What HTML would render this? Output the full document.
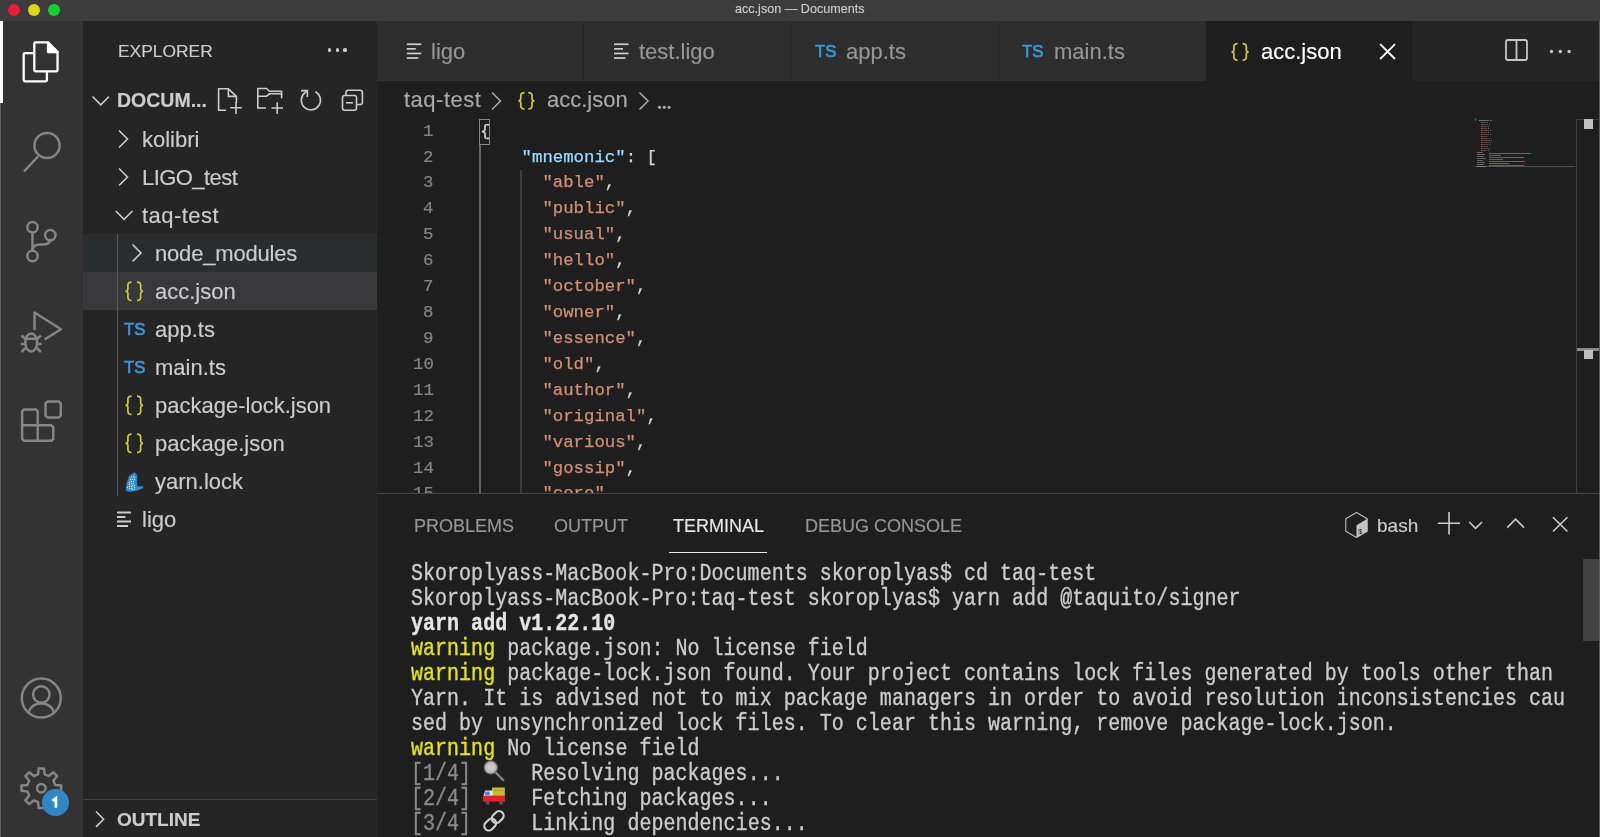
<!DOCTYPE html>
<html><head><meta charset="utf-8">
<style>
*{margin:0;padding:0;box-sizing:border-box}
html,body{width:1600px;height:837px;overflow:hidden;background:#1e1e1e;font-family:"Liberation Sans",sans-serif}
.a{position:absolute}
.t{position:absolute;white-space:pre;line-height:1;will-change:transform;-webkit-text-stroke:0.15px currentColor}
.m{position:absolute;white-space:pre;font-family:"Liberation Mono",monospace;will-change:transform}
svg{position:absolute;left:0;top:0;overflow:visible}
</style></head><body>
<div class="a" style="left:0;top:0;width:1600px;height:21px;background:#3c3c3c"></div>
<div class="a" style="left:0;top:21px;width:83px;height:816px;background:#333333"></div>
<div class="a" style="left:0;top:21px;width:3px;height:82px;background:#ffffff"></div>
<div class="a" style="left:83px;top:21px;width:294px;height:816px;background:#252526"></div>
<div class="a" style="left:377px;top:21px;width:1223px;height:60px;background:#252526"></div>
<div class="a" style="left:377px;top:21px;width:206px;height:60px;background:#2d2d2d"></div>
<div class="a" style="left:584px;top:21px;width:206px;height:60px;background:#2d2d2d"></div>
<div class="a" style="left:791px;top:21px;width:207px;height:60px;background:#2d2d2d"></div>
<div class="a" style="left:999px;top:21px;width:207px;height:60px;background:#2d2d2d"></div>
<div class="a" style="left:1206px;top:21px;width:207px;height:60px;background:#1e1e1e"></div>
<div class="a" style="left:377px;top:81px;width:1223px;height:412px;background:#1e1e1e"></div>
<div class="a" style="left:377px;top:493px;width:1223px;height:1px;background:#474747"></div>
<div class="a" style="left:377px;top:494px;width:1223px;height:343px;background:#1e1e1e"></div>
<div class="a" style="left:8px;top:4px;width:12px;height:12px;border-radius:50%;background:#ee1a3a"></div>
<div class="a" style="left:28px;top:4px;width:12px;height:12px;border-radius:50%;background:#e2d512"></div>
<div class="a" style="left:48px;top:4px;width:12px;height:12px;border-radius:50%;background:#12d23a"></div>
<div class="t" style="left:735.00px;top:2.83px;font-size:12.6px;color:#cccccc;font-weight:normal;">acc.json — Documents</div>
<svg width="83" height="837" style="left:0;top:0">
<g fill="none" stroke-linejoin="round" stroke-linecap="butt">
 <!-- files (white) -->
 <g stroke="#ffffff" stroke-width="2.3">
  <path d="M34.3 53.1 L24.9 53.1 Q23.7 53.1 23.7 54.3 L23.7 80.1 Q23.7 81.3 24.9 81.3 L45.7 81.3 Q46.9 81.3 46.9 80.1 L46.9 71.3"/>
  <path d="M35.5 42.45 L48 42.45 L57.55 52 L57.55 70.1 Q57.55 71.3 56.35 71.3 L35.5 71.3 Q34.3 71.3 34.3 70.1 L34.3 43.65 Q34.3 42.45 35.5 42.45 Z"/>
  <path d="M48 42.45 L48 52 L57.55 52 Z" fill="#ffffff"/>
 </g>
 <g stroke="#858585" stroke-width="2.5">
  <!-- search -->
  <circle cx="47" cy="145.5" r="12.6"/>
  <path d="M24 171.5 L38 156.5"/>
  <!-- source control -->
  <circle cx="32.5" cy="227.2" r="5.2"/>
  <circle cx="50.3" cy="235.1" r="5.2"/>
  <circle cx="32.5" cy="256" r="5.2"/>
  <path d="M32.5 232.4 L32.5 250.8"/>
  <path d="M32.5 250 Q33 245 39 244.5 L44 244.5 Q49.5 244 50.3 240.3"/>
  <!-- debug -->
  <path d="M34.5 330 L34.5 312.5 L61 329.3 L44.6 339.5"/>
  <ellipse cx="31.2" cy="342.5" rx="5.9" ry="9"/>
  <path d="M25.6 338.8 L36.8 338.8"/>
  <path d="M21.5 335.5 L25.5 339 M40.9 335.5 L36.9 339 M20.8 344 L25 344 M41.6 344 L37.4 344 M21.5 352 L25.5 348 M40.9 352 L36.9 348"/>
  <!-- extensions -->
  <path d="M23.9 409.45 L35.9 409.45 L37.7 411.25 L37.7 425.3 L51.45 425.3 L53.25 427.1 L53.25 438.95 L51.45 440.75 L23.95 440.75 L22.15 438.95 L22.15 411.25 Z"/>
  <path d="M22.15 425.3 L37.7 425.3 L37.7 440.75"/>
  <path d="M47.35 401.55 L58.95 401.55 L60.75 403.35 L60.75 415.65 L58.95 417.45 L47.35 417.45 L45.55 415.65 L45.55 403.35 Z"/>
  <!-- account -->
  <circle cx="41.3" cy="698.1" r="19.5"/>
  <circle cx="41.3" cy="694.5" r="8.2"/>
  <path d="M28.5 713 Q31 703.5 41.3 703.5 Q51.6 703.5 54.1 713"/>
  <!-- gear -->
  <circle cx="41.3" cy="788.2" r="4.3"/>
 </g>
</g>
</svg>
<svg width="83" height="837"><path d="M38.64 768.38 L43.96 768.38 L44.61 774.39 L48.72 776.09 L53.43 772.30 L57.20 776.07 L53.41 780.78 L55.11 784.89 L61.12 785.54 L61.12 790.86 L55.11 791.51 L53.41 795.62 L57.20 800.33 L53.43 804.10 L48.72 800.31 L44.61 802.01 L43.96 808.02 L38.64 808.02 L37.99 802.01 L33.88 800.31 L29.17 804.10 L25.40 800.33 L29.19 795.62 L27.49 791.51 L21.48 790.86 L21.48 785.54 L27.49 784.89 L29.19 780.78 L25.40 776.07 L29.17 772.30 L33.88 776.09 L37.99 774.39 Z" fill="none" stroke="#858585" stroke-width="2.5" stroke-linejoin="round"/></svg>
<div class="a" style="left:42.2px;top:789.3px;width:26.6px;height:26.6px;border-radius:50%;background:#2f87c6"></div>
<svg width="83" height="837"><path d="M52.3 800.8 L55.9 798.2 L55.9 807.8" fill="none" stroke="#ffffff" stroke-width="2.7" stroke-linejoin="miter"/></svg>
<div class="t" style="left:117.60px;top:43.27px;font-size:17.4px;color:#cccccc;font-weight:normal;">EXPLORER</div>
<div class="a" style="left:327.90px;top:48.40px;width:3.2px;height:3.2px;border-radius:50%;background:#cccccc"></div>
<div class="a" style="left:335.60px;top:48.40px;width:3.2px;height:3.2px;border-radius:50%;background:#cccccc"></div>
<div class="a" style="left:343.40px;top:48.40px;width:3.2px;height:3.2px;border-radius:50%;background:#cccccc"></div>
<div class="t" style="left:117.30px;top:91.49px;font-size:19.5px;color:#cccccc;font-weight:bold;">DOCUM...</div>
<svg width="400" height="837"><g fill="none" stroke="#cccccc" stroke-width="1.6" stroke-linejoin="miter">
 <path d="M92.5 96.5 L100.8 104.8 L109 96.5"/>
 <!-- new file -->
 <path d="M226 110.3 L218.6 110.3 L218.6 88.8 L228.4 88.8 L236.4 96.4 L236.4 103"/>
 <path d="M228.4 88.8 L228.4 96.4 L236.4 96.4"/>
 <path d="M230.2 107.8 L241.9 107.8 M236 102.3 L236 114"/>
 <!-- new folder -->
 <path d="M266 108 L257.8 108 L257.8 88.5 L266.5 88.5 L269.5 91.3 L281.6 91.3 L281.6 98.2"/>
 <path d="M257.8 96.2 L266.5 96.2 L269.5 93.8 L281.6 93.8"/>
 <path d="M271.5 108 L283 108 M277.2 102.3 L277.2 114"/>
 <!-- refresh -->
 <path d="M315.4 91.8 A9.6 9.6 0 1 1 304.7 92.95 L307 90.8"/>
 <path d="M301 90.6 L307.4 90.6 L307.4 97" stroke-linejoin="miter"/>
 <!-- collapse -->
 <rect x="342.5" y="95.5" width="14" height="14.8" rx="2.2"/>
 <path d="M348.3 90.3 L360 90.3 Q362.4 90.3 362.4 92.6 L362.4 102.2 Q362.4 104.5 360 104.5 L356.5 104.5"/>
 <path d="M348.3 90.3 Q346 90.3 346 92.6 L346 95.5"/>
 <path d="M346 102.8 L353 102.8"/>
</g></svg>
<div class="a" style="left:83px;top:234px;width:294px;height:38px;background:#2a2d2e"></div>
<div class="a" style="left:83px;top:272px;width:294px;height:38px;background:#38383a"></div>
<div class="a" style="left:117px;top:234px;width:1px;height:262px;background:#585858"></div>
<div class="t" style="left:141.80px;top:128.88px;font-size:22px;color:#cccccc;font-weight:normal;letter-spacing:0px">kolibri</div>
<div class="t" style="left:141.80px;top:166.93px;font-size:22px;color:#cccccc;font-weight:normal;letter-spacing:-0.55px">LIGO_test</div>
<div class="t" style="left:141.80px;top:204.98px;font-size:22px;color:#cccccc;font-weight:normal;letter-spacing:0.45px">taq-test</div>
<div class="t" style="left:155.30px;top:243.03px;font-size:22px;color:#cccccc;font-weight:normal;letter-spacing:-0.18px">node_modules</div>
<div class="t" style="left:155.30px;top:281.08px;font-size:22px;color:#cccccc;font-weight:normal;letter-spacing:0px">acc.json</div>
<div class="t" style="left:155.30px;top:319.13px;font-size:22px;color:#cccccc;font-weight:normal;letter-spacing:0px">app.ts</div>
<div class="t" style="left:123.80px;top:322.03px;font-size:16.8px;color:#3a9ad9;font-weight:normal;-webkit-text-stroke:0.6px #3a9ad9">TS</div>
<div class="t" style="left:155.30px;top:357.18px;font-size:22px;color:#cccccc;font-weight:normal;letter-spacing:0px">main.ts</div>
<div class="t" style="left:123.80px;top:360.08px;font-size:16.8px;color:#3a9ad9;font-weight:normal;-webkit-text-stroke:0.6px #3a9ad9">TS</div>
<div class="t" style="left:155.30px;top:395.23px;font-size:22px;color:#cccccc;font-weight:normal;letter-spacing:0px">package-lock.json</div>
<div class="t" style="left:155.30px;top:433.28px;font-size:22px;color:#cccccc;font-weight:normal;letter-spacing:0px">package.json</div>
<div class="t" style="left:155.30px;top:471.33px;font-size:22px;color:#cccccc;font-weight:normal;letter-spacing:0px">yarn.lock</div>
<div class="t" style="left:141.80px;top:509.38px;font-size:22px;color:#cccccc;font-weight:normal;letter-spacing:0px">ligo</div>
<svg width="400" height="837"><path d="M119.0 130.5 L127.5 139.0 L119.0 147.5" fill="none" stroke="#cccccc" stroke-width="1.6"/><path d="M119.0 168.5 L127.5 177.0 L119.0 185.5" fill="none" stroke="#cccccc" stroke-width="1.6"/><path d="M115.8 211.0 L124.1 219.3 L132.4 211.0" fill="none" stroke="#cccccc" stroke-width="1.6"/><path d="M132.5 244.5 L141.0 253.0 L132.5 261.5" fill="none" stroke="#cccccc" stroke-width="1.6"/><path d="M131.60 282.10 Q127.90 282.10 127.90 285.30 L127.90 289.10 Q127.90 291.30 125.50 291.30 Q127.90 291.30 127.90 293.50 L127.90 297.30 Q127.90 300.50 131.60 300.50 M137.00 282.10 Q140.70 282.10 140.70 285.30 L140.70 289.10 Q140.70 291.30 143.10 291.30 Q140.70 291.30 140.70 293.50 L140.70 297.30 Q140.70 300.50 137.00 300.50" fill="none" stroke="#cbcb41" stroke-width="1.7"/><path d="M131.60 396.10 Q127.90 396.10 127.90 399.30 L127.90 403.10 Q127.90 405.30 125.50 405.30 Q127.90 405.30 127.90 407.50 L127.90 411.30 Q127.90 414.50 131.60 414.50 M137.00 396.10 Q140.70 396.10 140.70 399.30 L140.70 403.10 Q140.70 405.30 143.10 405.30 Q140.70 405.30 140.70 407.50 L140.70 411.30 Q140.70 414.50 137.00 414.50" fill="none" stroke="#cbcb41" stroke-width="1.7"/><path d="M131.60 434.10 Q127.90 434.10 127.90 437.30 L127.90 441.10 Q127.90 443.30 125.50 443.30 Q127.90 443.30 127.90 445.50 L127.90 449.30 Q127.90 452.50 131.60 452.50 M137.00 434.10 Q140.70 434.10 140.70 437.30 L140.70 441.10 Q140.70 443.30 143.10 443.30 Q140.70 443.30 140.70 445.50 L140.70 449.30 Q140.70 452.50 137.00 452.50" fill="none" stroke="#cbcb41" stroke-width="1.7"/><path d="M129.0 476.4 L134.5 472.6 L136.9 475.3 L136.8 480.3 L137.0 486.8 L142.9 486.4 L142.9 488.0 L137.2 490.2 L130.0 491.4 L126.1 490.8 L126.5 485.0 L127.6 481.5 Z" fill="#2b8fd2" stroke="#2b8fd2" stroke-width="0.6" stroke-linejoin="round"/><circle cx="131.4" cy="477.5" r="0.7" fill="#d8cfb0"/><circle cx="133.5" cy="476.5" r="0.7" fill="#d8cfb0"/><circle cx="134.5" cy="477.5" r="0.7" fill="#d8cfb0"/><circle cx="130.4" cy="479.5" r="0.7" fill="#d8cfb0"/><circle cx="132.4" cy="479.5" r="0.7" fill="#d8cfb0"/><circle cx="134.4" cy="479.5" r="0.7" fill="#d8cfb0"/><circle cx="131.4" cy="481.5" r="0.7" fill="#d8cfb0"/><circle cx="133.4" cy="481.5" r="0.7" fill="#d8cfb0"/><circle cx="129.4" cy="482.4" r="0.7" fill="#d8cfb0"/><circle cx="131.4" cy="483.5" r="0.7" fill="#d8cfb0"/><circle cx="133.4" cy="483.5" r="0.7" fill="#d8cfb0"/><circle cx="129.4" cy="484.5" r="0.7" fill="#d8cfb0"/><circle cx="132.4" cy="485.5" r="0.7" fill="#d8cfb0"/><circle cx="134.4" cy="485.5" r="0.7" fill="#d8cfb0"/><circle cx="129.4" cy="486.5" r="0.7" fill="#d8cfb0"/><circle cx="131.4" cy="486.5" r="0.7" fill="#d8cfb0"/><circle cx="134.4" cy="487.5" r="0.7" fill="#d8cfb0"/><circle cx="127.4" cy="487.5" r="0.7" fill="#d8cfb0"/><circle cx="129.4" cy="488.5" r="0.7" fill="#d8cfb0"/><circle cx="131.4" cy="488.5" r="0.7" fill="#d8cfb0"/><circle cx="132.4" cy="489.5" r="0.7" fill="#d8cfb0"/><circle cx="134.4" cy="489.5" r="0.7" fill="#d8cfb0"/><rect x="117" y="511.5" width="14" height="2" fill="#cccccc"/><rect x="117" y="516.0" width="8.5" height="2" fill="#cccccc"/><rect x="117" y="520.5" width="14" height="2" fill="#cccccc"/><rect x="117" y="525.0" width="11" height="2" fill="#cccccc"/></svg>
<div class="a" style="left:83px;top:799px;width:294px;height:1px;background:#3f3f3f"></div>
<svg width="400" height="837"><path d="M96 811.5 L103.6 819.2 L96 826.9" fill="none" stroke="#cccccc" stroke-width="1.6"/></svg>
<div class="t" style="left:116.80px;top:809.62px;font-size:19px;color:#cccccc;font-weight:bold;">OUTLINE</div>
<svg width="1600" height="100"><rect x="406.8" y="43.4" width="14.5" height="1.7" fill="#cfcfcf"/><rect x="406.8" y="48.0" width="9" height="1.7" fill="#cfcfcf"/><rect x="406.8" y="52.6" width="14.5" height="1.7" fill="#cfcfcf"/><rect x="406.8" y="57.2" width="11.5" height="1.7" fill="#cfcfcf"/><rect x="614" y="43.4" width="14.5" height="1.7" fill="#cfcfcf"/><rect x="614" y="48.0" width="9" height="1.7" fill="#cfcfcf"/><rect x="614" y="52.6" width="14.5" height="1.7" fill="#cfcfcf"/><rect x="614" y="57.2" width="11.5" height="1.7" fill="#cfcfcf"/></svg>
<div class="t" style="left:431.20px;top:40.88px;font-size:22px;color:#969696;font-weight:normal;">ligo</div>
<div class="t" style="left:639.40px;top:40.88px;font-size:22px;color:#969696;font-weight:normal;">test.ligo</div>
<div class="t" style="left:815.00px;top:43.78px;font-size:16.8px;color:#3a9ad9;font-weight:normal;-webkit-text-stroke:0.6px #3a9ad9">TS</div>
<div class="t" style="left:846.20px;top:40.88px;font-size:22px;color:#969696;font-weight:normal;">app.ts</div>
<div class="t" style="left:1022.40px;top:43.78px;font-size:16.8px;color:#3a9ad9;font-weight:normal;-webkit-text-stroke:0.6px #3a9ad9">TS</div>
<div class="t" style="left:1053.60px;top:40.88px;font-size:22px;color:#969696;font-weight:normal;">main.ts</div>
<svg width="1600" height="100"><path d="M1237.60 43.60 Q1233.90 43.60 1233.90 46.80 L1233.90 49.70 Q1233.90 51.90 1231.50 51.90 Q1233.90 51.90 1233.90 54.10 L1233.90 57.00 Q1233.90 60.20 1237.60 60.20 M1242.60 43.60 Q1246.30 43.60 1246.30 46.80 L1246.30 49.70 Q1246.30 51.90 1248.70 51.90 Q1246.30 51.90 1246.30 54.10 L1246.30 57.00 Q1246.30 60.20 1242.60 60.20" fill="none" stroke="#cbcb41" stroke-width="1.7"/></svg>
<div class="t" style="left:1260.80px;top:40.88px;font-size:22px;color:#ffffff;font-weight:normal;">acc.json</div>
<svg width="1600" height="100"><g fill="none" stroke="#ffffff" stroke-width="1.8">
<path d="M1380.2 44.2 L1395 59 M1395 44.2 L1380.2 59"/></g>
<g fill="none" stroke="#c5c5c5" stroke-width="1.8">
<rect x="1506" y="40" width="21" height="20" rx="2"/>
<path d="M1516.5 40 L1516.5 60"/></g>
<circle cx="1551.5" cy="51.5" r="1.7" fill="#c5c5c5"/><circle cx="1560.3" cy="51.5" r="1.7" fill="#c5c5c5"/><circle cx="1569.1" cy="51.5" r="1.7" fill="#c5c5c5"/>
</svg>
<div class="t" style="left:404.00px;top:89.48px;font-size:22px;color:#a9a9a9;font-weight:normal;letter-spacing:0.5px">taq-test</div>
<svg width="1600" height="200"><path d="M524.50 92.70 Q520.80 92.70 520.80 95.90 L520.80 98.60 Q520.80 100.80 518.40 100.80 Q520.80 100.80 520.80 103.00 L520.80 105.70 Q520.80 108.90 524.50 108.90 M528.30 92.70 Q532.00 92.70 532.00 95.90 L532.00 98.60 Q532.00 100.80 534.40 100.80 Q532.00 100.80 532.00 103.00 L532.00 105.70 Q532.00 108.90 528.30 108.90" fill="none" stroke="#cbcb41" stroke-width="1.7"/></svg>
<div class="t" style="left:546.90px;top:89.48px;font-size:22px;color:#a9a9a9;font-weight:normal;">acc.json</div>
<svg width="1600" height="200"><g fill="none" stroke="#a9a9a9" stroke-width="1.5">
<path d="M492 92.5 L500.5 101 L492 109.5"/><path d="M639.5 92.5 L648 101 L639.5 109.5"/></g>
<circle cx="659.5" cy="107.3" r="1.6" fill="#a9a9a9"/><circle cx="664.3" cy="107.3" r="1.6" fill="#a9a9a9"/><circle cx="669.1" cy="107.3" r="1.6" fill="#a9a9a9"/>
</svg>
<div class="a" style="left:377px;top:81px;width:1200px;height:412px;overflow:hidden">
<div class="m" style="left:46.10px;top:37.60px;font-size:17.33px;line-height:25.92px;color:#858585;-webkit-text-stroke:0.2px currentColor">1</div>
<div class="m" style="left:46.10px;top:63.52px;font-size:17.33px;line-height:25.92px;color:#858585;-webkit-text-stroke:0.2px currentColor">2</div>
<div class="m" style="left:46.10px;top:89.44px;font-size:17.33px;line-height:25.92px;color:#858585;-webkit-text-stroke:0.2px currentColor">3</div>
<div class="m" style="left:46.10px;top:115.36px;font-size:17.33px;line-height:25.92px;color:#858585;-webkit-text-stroke:0.2px currentColor">4</div>
<div class="m" style="left:46.10px;top:141.28px;font-size:17.33px;line-height:25.92px;color:#858585;-webkit-text-stroke:0.2px currentColor">5</div>
<div class="m" style="left:46.10px;top:167.20px;font-size:17.33px;line-height:25.92px;color:#858585;-webkit-text-stroke:0.2px currentColor">6</div>
<div class="m" style="left:46.10px;top:193.12px;font-size:17.33px;line-height:25.92px;color:#858585;-webkit-text-stroke:0.2px currentColor">7</div>
<div class="m" style="left:46.10px;top:219.04px;font-size:17.33px;line-height:25.92px;color:#858585;-webkit-text-stroke:0.2px currentColor">8</div>
<div class="m" style="left:46.10px;top:244.96px;font-size:17.33px;line-height:25.92px;color:#858585;-webkit-text-stroke:0.2px currentColor">9</div>
<div class="m" style="left:35.70px;top:270.88px;font-size:17.33px;line-height:25.92px;color:#858585;-webkit-text-stroke:0.2px currentColor">10</div>
<div class="m" style="left:35.70px;top:296.80px;font-size:17.33px;line-height:25.92px;color:#858585;-webkit-text-stroke:0.2px currentColor">11</div>
<div class="m" style="left:35.70px;top:322.72px;font-size:17.33px;line-height:25.92px;color:#858585;-webkit-text-stroke:0.2px currentColor">12</div>
<div class="m" style="left:35.70px;top:348.64px;font-size:17.33px;line-height:25.92px;color:#858585;-webkit-text-stroke:0.2px currentColor">13</div>
<div class="m" style="left:35.70px;top:374.56px;font-size:17.33px;line-height:25.92px;color:#858585;-webkit-text-stroke:0.2px currentColor">14</div>
<div class="m" style="left:35.70px;top:400.48px;font-size:17.33px;line-height:25.92px;color:#858585;-webkit-text-stroke:0.2px currentColor">15</div>
<div class="a" style="left:102px;top:64px;width:2px;height:400px;background:#656565"></div>
<div class="a" style="left:143px;top:89.4px;width:2px;height:400px;background:#3c3c3c"></div>
<div class="a" style="left:102px;top:38px;width:10.5px;height:26px;border:1px solid #888888"></div>
<div class="m" style="left:102.50px;top:37.60px;font-size:17.33px;line-height:25.92px;color:#d4d4d4;letter-spacing:0.002px;-webkit-text-stroke:0.25px currentColor">{</div>
<div class="m" style="left:102.50px;top:63.52px;font-size:17.33px;line-height:25.92px;color:#d4d4d4;letter-spacing:0.002px;-webkit-text-stroke:0.25px currentColor">    <span style="color:#9cdcfe">"mnemonic"</span>: [</div>
<div class="m" style="left:102.50px;top:89.44px;font-size:17.33px;line-height:25.92px;color:#d4d4d4;letter-spacing:0.002px;-webkit-text-stroke:0.25px currentColor">      <span style="color:#ce9178">"able"</span>,</div>
<div class="m" style="left:102.50px;top:115.36px;font-size:17.33px;line-height:25.92px;color:#d4d4d4;letter-spacing:0.002px;-webkit-text-stroke:0.25px currentColor">      <span style="color:#ce9178">"public"</span>,</div>
<div class="m" style="left:102.50px;top:141.28px;font-size:17.33px;line-height:25.92px;color:#d4d4d4;letter-spacing:0.002px;-webkit-text-stroke:0.25px currentColor">      <span style="color:#ce9178">"usual"</span>,</div>
<div class="m" style="left:102.50px;top:167.20px;font-size:17.33px;line-height:25.92px;color:#d4d4d4;letter-spacing:0.002px;-webkit-text-stroke:0.25px currentColor">      <span style="color:#ce9178">"hello"</span>,</div>
<div class="m" style="left:102.50px;top:193.12px;font-size:17.33px;line-height:25.92px;color:#d4d4d4;letter-spacing:0.002px;-webkit-text-stroke:0.25px currentColor">      <span style="color:#ce9178">"october"</span>,</div>
<div class="m" style="left:102.50px;top:219.04px;font-size:17.33px;line-height:25.92px;color:#d4d4d4;letter-spacing:0.002px;-webkit-text-stroke:0.25px currentColor">      <span style="color:#ce9178">"owner"</span>,</div>
<div class="m" style="left:102.50px;top:244.96px;font-size:17.33px;line-height:25.92px;color:#d4d4d4;letter-spacing:0.002px;-webkit-text-stroke:0.25px currentColor">      <span style="color:#ce9178">"essence"</span>,</div>
<div class="m" style="left:102.50px;top:270.88px;font-size:17.33px;line-height:25.92px;color:#d4d4d4;letter-spacing:0.002px;-webkit-text-stroke:0.25px currentColor">      <span style="color:#ce9178">"old"</span>,</div>
<div class="m" style="left:102.50px;top:296.80px;font-size:17.33px;line-height:25.92px;color:#d4d4d4;letter-spacing:0.002px;-webkit-text-stroke:0.25px currentColor">      <span style="color:#ce9178">"author"</span>,</div>
<div class="m" style="left:102.50px;top:322.72px;font-size:17.33px;line-height:25.92px;color:#d4d4d4;letter-spacing:0.002px;-webkit-text-stroke:0.25px currentColor">      <span style="color:#ce9178">"original"</span>,</div>
<div class="m" style="left:102.50px;top:348.64px;font-size:17.33px;line-height:25.92px;color:#d4d4d4;letter-spacing:0.002px;-webkit-text-stroke:0.25px currentColor">      <span style="color:#ce9178">"various"</span>,</div>
<div class="m" style="left:102.50px;top:374.56px;font-size:17.33px;line-height:25.92px;color:#d4d4d4;letter-spacing:0.002px;-webkit-text-stroke:0.25px currentColor">      <span style="color:#ce9178">"gossip"</span>,</div>
<div class="m" style="left:102.50px;top:400.48px;font-size:17.33px;line-height:25.92px;color:#d4d4d4;letter-spacing:0.002px;-webkit-text-stroke:0.25px currentColor">      <span style="color:#ce9178">"core"</span>,</div>
</div>
<div class="a" style="left:1576px;top:119px;width:1px;height:374px;background:#3f3f3f"></div>
<div class="a" style="left:1576px;top:119px;width:24px;height:1px;background:#3f3f3f"></div>
<div class="a" style="left:1584px;top:119px;width:9px;height:10px;background:#bfbfbf"></div>
<div class="a" style="left:1577px;top:348px;width:23px;height:3px;background:#8a8a8a"></div>
<div class="a" style="left:1584px;top:350px;width:9px;height:9px;background:#bfbfbf"></div>
<div class="a" style="left:1475px;top:165.5px;width:100px;height:1px;background:#505050"></div>
<svg width="1600" height="300"><g opacity="0.55"><rect x="1475" y="118.5" width="1" height="2" fill="#a0a0a0"/><rect x="1479" y="120" width="1" height="1" fill="#9cdcfe"/><rect x="1480" y="120" width="9" height="1" fill="#8fb8cc"/><rect x="1490" y="120" width="2" height="1" fill="#a0a0a0"/><rect x="1481" y="122" width="1" height="1" fill="#ce9178"/><rect x="1482" y="122" width="4" height="1" fill="#ce9178" opacity="0.6"/><rect x="1487" y="122" width="1" height="1" fill="#a0a0a0"/><rect x="1481" y="124" width="1" height="1" fill="#ce9178"/><rect x="1482" y="124" width="6" height="1" fill="#ce9178" opacity="0.6"/><rect x="1489" y="124" width="1" height="1" fill="#a0a0a0"/><rect x="1481" y="126" width="1" height="1" fill="#ce9178"/><rect x="1482" y="126" width="5" height="1" fill="#ce9178" opacity="0.6"/><rect x="1488" y="126" width="1" height="1" fill="#a0a0a0"/><rect x="1481" y="128" width="1" height="1" fill="#ce9178"/><rect x="1482" y="128" width="5" height="1" fill="#ce9178" opacity="0.6"/><rect x="1488" y="128" width="1" height="1" fill="#a0a0a0"/><rect x="1481" y="130" width="1" height="1" fill="#ce9178"/><rect x="1482" y="130" width="7" height="1" fill="#ce9178" opacity="0.6"/><rect x="1490" y="130" width="1" height="1" fill="#a0a0a0"/><rect x="1481" y="132" width="1" height="1" fill="#ce9178"/><rect x="1482" y="132" width="5" height="1" fill="#ce9178" opacity="0.6"/><rect x="1488" y="132" width="1" height="1" fill="#a0a0a0"/><rect x="1481" y="134" width="1" height="1" fill="#ce9178"/><rect x="1482" y="134" width="7" height="1" fill="#ce9178" opacity="0.6"/><rect x="1490" y="134" width="1" height="1" fill="#a0a0a0"/><rect x="1481" y="136" width="1" height="1" fill="#ce9178"/><rect x="1482" y="136" width="3" height="1" fill="#ce9178" opacity="0.6"/><rect x="1486" y="136" width="1" height="1" fill="#a0a0a0"/><rect x="1481" y="138" width="1" height="1" fill="#ce9178"/><rect x="1482" y="138" width="6" height="1" fill="#ce9178" opacity="0.6"/><rect x="1489" y="138" width="1" height="1" fill="#a0a0a0"/><rect x="1481" y="140" width="1" height="1" fill="#ce9178"/><rect x="1482" y="140" width="8" height="1" fill="#ce9178" opacity="0.6"/><rect x="1491" y="140" width="1" height="1" fill="#a0a0a0"/><rect x="1481" y="142" width="1" height="1" fill="#ce9178"/><rect x="1482" y="142" width="7" height="1" fill="#ce9178" opacity="0.6"/><rect x="1490" y="142" width="1" height="1" fill="#a0a0a0"/><rect x="1481" y="144" width="1" height="1" fill="#ce9178"/><rect x="1482" y="144" width="6" height="1" fill="#ce9178" opacity="0.6"/><rect x="1489" y="144" width="1" height="1" fill="#a0a0a0"/><rect x="1481" y="146" width="1" height="1" fill="#ce9178"/><rect x="1482" y="146" width="4" height="1" fill="#ce9178" opacity="0.6"/><rect x="1487" y="146" width="1" height="1" fill="#a0a0a0"/><rect x="1481" y="148" width="1" height="1" fill="#ce9178"/><rect x="1482" y="148" width="6" height="1" fill="#ce9178" opacity="0.6"/><rect x="1489" y="148" width="1" height="1" fill="#a0a0a0"/><rect x="1481" y="150" width="1" height="1" fill="#ce9178"/><rect x="1482" y="150" width="5" height="1" fill="#ce9178" opacity="0.6"/><rect x="1488" y="150" width="1" height="1" fill="#a0a0a0"/><rect x="1477" y="152.0" width="6" height="1" fill="#a0a0a0"/><rect x="1477" y="154.0" width="8" height="1" fill="#a0a0a0"/><rect x="1477" y="156.0" width="7" height="1" fill="#a0a0a0"/><rect x="1477" y="158.0" width="9" height="1" fill="#a0a0a0"/><rect x="1477" y="160.0" width="6" height="1" fill="#a0a0a0"/><rect x="1477" y="162.0" width="8" height="1" fill="#a0a0a0"/><rect x="1477" y="164.0" width="7" height="1" fill="#a0a0a0"/><rect x="1477" y="166.0" width="9" height="1" fill="#a0a0a0"/><rect x="1489" y="153" width="42" height="1" fill="#ce9178"/><rect x="1489" y="155" width="12" height="1" fill="#ce9178"/><rect x="1489" y="157" width="35" height="1" fill="#ce9178"/><rect x="1489" y="159" width="14" height="1" fill="#ce9178"/><rect x="1489" y="161" width="36" height="1" fill="#ce9178"/><rect x="1489" y="163" width="20" height="1" fill="#ce9178"/><rect x="1489" y="165" width="35" height="1" fill="#ce9178"/></g></svg>
<div class="t" style="left:414.00px;top:516.96px;font-size:18px;color:#969696;font-weight:normal;">PROBLEMS</div>
<div class="t" style="left:554.30px;top:516.96px;font-size:18px;color:#969696;font-weight:normal;">OUTPUT</div>
<div class="t" style="left:673.00px;top:516.96px;font-size:18px;color:#e7e7e7;font-weight:normal;">TERMINAL</div>
<div class="t" style="left:804.60px;top:516.96px;font-size:18px;color:#969696;font-weight:normal;">DEBUG CONSOLE</div>
<div class="a" style="left:669px;top:551.5px;width:98px;height:1.6px;background:#e7e7e7"></div>
<div class="t" style="left:1377.00px;top:515.62px;font-size:19px;color:#cccccc;font-weight:normal;">bash</div>
<svg width="1600" height="837"><g fill="none" stroke="#cccccc" stroke-width="1.6">
<path d="M1449 512 L1449 534.6 M1437.8 523.3 L1460 523.3"/>
<path d="M1469.2 522 L1475.6 528.4 L1482 522"/>
<path d="M1507.2 527.6 L1515.6 519.2 L1524 527.6"/>
<path d="M1553 517.3 L1567.4 531.5 M1567.4 517.3 L1553 531.5"/>
</g>
<g stroke="#bdbdbd" stroke-width="1.1" fill="none" stroke-linejoin="round">
<path d="M1356.5 512.6 L1367.2 518.8 L1367.2 531.2 L1356.5 537.4 L1345.8 531.2 L1345.8 518.8 Z"/>
</g>
<path d="M1356.5 525.2 L1367.2 518.8 L1367.2 531.2 L1356.5 537.4 Z" fill="#c4c4c4"/>
<text x="1358" y="533.5" font-size="7.5" font-family="Liberation Mono" fill="#1e1e1e">$_</text>
</svg>
<div class="a" style="left:1583px;top:559px;width:17px;height:82px;background:#424242"></div>
<div class="m" style="left:410.60px;top:561.60px;font-size:20px;line-height:25px;color:#cccccc;letter-spacing:0.020px;-webkit-text-stroke:0.3px currentColor;transform:scaleY(1.15);transform-origin:0 17.83px">Skoroplyass-MacBook-Pro:Documents skoroplyas$ cd taq-test</div>
<div class="m" style="left:410.60px;top:586.60px;font-size:20px;line-height:25px;color:#cccccc;letter-spacing:0.020px;-webkit-text-stroke:0.3px currentColor;transform:scaleY(1.15);transform-origin:0 17.83px">Skoroplyass-MacBook-Pro:taq-test skoroplyas$ yarn add @taquito/signer</div>
<div class="m" style="left:410.60px;top:611.60px;font-size:20px;line-height:25px;color:#cccccc;letter-spacing:0.020px;-webkit-text-stroke:0.3px currentColor;transform:scaleY(1.15);transform-origin:0 17.83px"><b style="color:#e5e5e5">yarn add v1.22.10</b></div>
<div class="m" style="left:410.60px;top:636.60px;font-size:20px;line-height:25px;color:#cccccc;letter-spacing:0.020px;-webkit-text-stroke:0.3px currentColor;transform:scaleY(1.15);transform-origin:0 17.83px"><span style="color:#e5e510">warning</span> package.json: No license field</div>
<div class="m" style="left:410.60px;top:661.60px;font-size:20px;line-height:25px;color:#cccccc;letter-spacing:0.020px;-webkit-text-stroke:0.3px currentColor;transform:scaleY(1.15);transform-origin:0 17.83px"><span style="color:#e5e510">warning</span> package-lock.json found. Your project contains lock files generated by tools other than</div>
<div class="m" style="left:410.60px;top:686.60px;font-size:20px;line-height:25px;color:#cccccc;letter-spacing:0.020px;-webkit-text-stroke:0.3px currentColor;transform:scaleY(1.15);transform-origin:0 17.83px">Yarn. It is advised not to mix package managers in order to avoid resolution inconsistencies cau</div>
<div class="m" style="left:410.60px;top:711.60px;font-size:20px;line-height:25px;color:#cccccc;letter-spacing:0.020px;-webkit-text-stroke:0.3px currentColor;transform:scaleY(1.15);transform-origin:0 17.83px">sed by unsynchronized lock files. To clear this warning, remove package-lock.json.</div>
<div class="m" style="left:410.60px;top:736.60px;font-size:20px;line-height:25px;color:#cccccc;letter-spacing:0.020px;-webkit-text-stroke:0.3px currentColor;transform:scaleY(1.15);transform-origin:0 17.83px"><span style="color:#e5e510">warning</span> No license field</div>
<div class="m" style="left:410.60px;top:761.60px;font-size:20px;line-height:25px;color:#cccccc;letter-spacing:0.020px;-webkit-text-stroke:0.3px currentColor;transform:scaleY(1.15);transform-origin:0 17.83px"><span style="color:#8a8a8a">[1/4]</span>     Resolving packages...</div>
<div class="m" style="left:410.60px;top:786.60px;font-size:20px;line-height:25px;color:#cccccc;letter-spacing:0.020px;-webkit-text-stroke:0.3px currentColor;transform:scaleY(1.15);transform-origin:0 17.83px"><span style="color:#8a8a8a">[2/4]</span>     Fetching packages...</div>
<div class="m" style="left:410.60px;top:811.60px;font-size:20px;line-height:25px;color:#cccccc;letter-spacing:0.020px;-webkit-text-stroke:0.3px currentColor;transform:scaleY(1.15);transform-origin:0 17.83px"><span style="color:#8a8a8a">[3/4]</span>     Linking dependencies...</div>
<svg width="1600" height="837">
<g transform="translate(482.7,761.6)">
 <path d="M12.5 10.5 L20.5 18.5" stroke="#3a3a3a" stroke-width="3.6" stroke-linecap="round"/>
 <path d="M12.5 10.5 L20.5 18.5" stroke="#8a8a8a" stroke-width="1.6" stroke-linecap="round"/>
 <circle cx="8.1" cy="5.9" r="6.6" fill="#b8b8b8" stroke="#6a6a6a" stroke-width="1.2"/>
 <circle cx="8.1" cy="5.9" r="4.2" fill="#c8c8c8"/>
</g>
<g transform="translate(482.7,786.6)">
 <rect x="9.3" y="0.9" width="12.8" height="9.5" fill="#c9bb2e"/>
 <rect x="9.3" y="3.5" width="12.8" height="1" fill="#b0a020"/>
 <path d="M0.5 10 L2.5 4 L10 4 L10 10 Z" fill="#e8e8e8"/>
 <rect x="2.5" y="5" width="4.5" height="3.5" fill="#3a8ad8"/>
 <rect x="0.3" y="9" width="22" height="6" fill="#e3202c"/>
 <circle cx="4.8" cy="16.2" r="2" fill="#555"/><circle cx="18.3" cy="16.2" r="2" fill="#555"/>
</g>
<g transform="translate(482.7,811.6)" fill="none" stroke="#cfcfcf" stroke-width="2.2">
 <rect x="1" y="8.5" width="13" height="9" rx="4.5" transform="rotate(-45 7.5 13)"/>
 <rect x="8.5" y="1" width="13" height="9" rx="4.5" transform="rotate(-45 15 5.5)"/>
</g>
</svg>
<div class="a" style="left:0;top:103px;width:1px;height:734px;background:#5e5e5e"></div>
<div class="a" style="left:1599px;top:21px;width:1px;height:816px;background:#5a5a5a"></div>
</body></html>
